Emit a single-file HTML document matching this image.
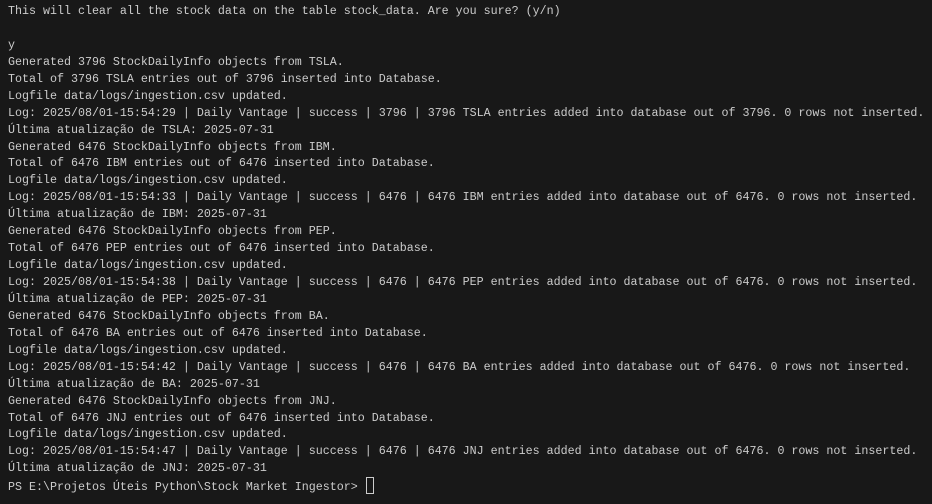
<!DOCTYPE html>
<html><head><meta charset="utf-8"><style>
html,body{margin:0;padding:0;background:#181818;width:932px;height:504px;overflow:hidden}
pre{margin:0;padding:3px 0 0 8px;font-family:"Liberation Mono",monospace;font-size:11.67px;line-height:16.93px;color:#cccccc;white-space:pre}
.cur{display:inline-block;width:6px;height:15px;border:1px solid #cccccc;vertical-align:-4px;margin-left:1px}
</style></head><body><pre>This will clear all the stock data on the table stock_data. Are you sure? (y/n)

y
Generated 3796 StockDailyInfo objects from TSLA.
Total of 3796 TSLA entries out of 3796 inserted into Database.
Logfile data/logs/ingestion.csv updated.
Log: 2025/08/01-15:54:29 | Daily Vantage | success | 3796 | 3796 TSLA entries added into database out of 3796. 0 rows not inserted.
Última atualização de TSLA: 2025-07-31
Generated 6476 StockDailyInfo objects from IBM.
Total of 6476 IBM entries out of 6476 inserted into Database.
Logfile data/logs/ingestion.csv updated.
Log: 2025/08/01-15:54:33 | Daily Vantage | success | 6476 | 6476 IBM entries added into database out of 6476. 0 rows not inserted.
Última atualização de IBM: 2025-07-31
Generated 6476 StockDailyInfo objects from PEP.
Total of 6476 PEP entries out of 6476 inserted into Database.
Logfile data/logs/ingestion.csv updated.
Log: 2025/08/01-15:54:38 | Daily Vantage | success | 6476 | 6476 PEP entries added into database out of 6476. 0 rows not inserted.
Última atualização de PEP: 2025-07-31
Generated 6476 StockDailyInfo objects from BA.
Total of 6476 BA entries out of 6476 inserted into Database.
Logfile data/logs/ingestion.csv updated.
Log: 2025/08/01-15:54:42 | Daily Vantage | success | 6476 | 6476 BA entries added into database out of 6476. 0 rows not inserted.
Última atualização de BA: 2025-07-31
Generated 6476 StockDailyInfo objects from JNJ.
Total of 6476 JNJ entries out of 6476 inserted into Database.
Logfile data/logs/ingestion.csv updated.
Log: 2025/08/01-15:54:47 | Daily Vantage | success | 6476 | 6476 JNJ entries added into database out of 6476. 0 rows not inserted.
Última atualização de JNJ: 2025-07-31
PS E:\Projetos Úteis Python\Stock Market Ingestor&gt; <span class="cur"></span></pre></body></html>
